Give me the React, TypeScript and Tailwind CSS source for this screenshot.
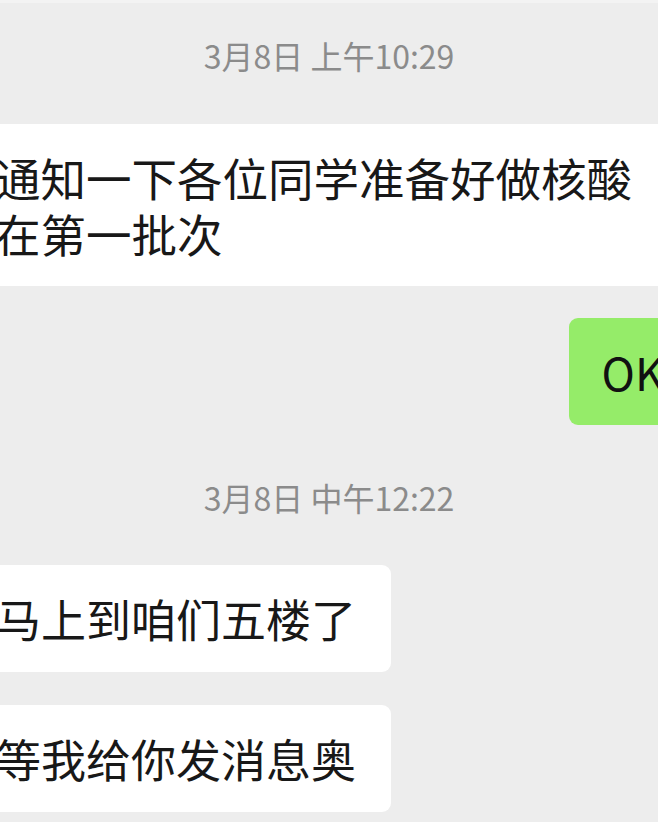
import React from "react";

const cjk = { fontFamily: '"Noto Sans CJK SC", "Noto Sans", sans-serif' };

export default function App() {
  return (
    <div
      className="w-[658px] h-[822px] bg-[#ededed] overflow-hidden flex flex-col"
      style={cjk}
    >
      <div className="h-[3px] bg-[#f3f3f3]" />
      <div className="mt-[32px] h-[40px] leading-[40px] text-center text-[32px] text-[#8b8b8b]">
        3月8日 上午10:29
      </div>

      <div className="mt-[49px] -ml-[40px] w-[720px] bg-white pl-[35px] py-[25px] text-[45.5px] leading-[56px] text-[#181818] rounded-[9px]">
        <div>通知一下各位同学准备好做核酸</div>
        <div>在第一批次</div>
      </div>

      <div className="mt-[32px] flex justify-end">
        <div className="-mr-[60px] bg-[#95ec69] rounded-[9px] pl-[33px] pr-[54px] py-[25px] text-[45px] leading-[57px] text-[#111]">
          OK
        </div>
      </div>

      <div className="mt-[52px] h-[40px] leading-[40px] text-center text-[32px] text-[#8b8b8b]">
        3月8日 中午12:22
      </div>

      <div className="mt-[48px] flex">
        <div className="-ml-[40px] bg-white rounded-[9px] pl-[36px] pr-[35px] py-[25px] text-[45px] leading-[57px] text-[#181818]">
          马上到咱们五楼了
        </div>
      </div>

      <div className="mt-[33px] flex">
        <div className="-ml-[40px] bg-white rounded-[9px] pl-[36px] pr-[35px] py-[25px] text-[45px] leading-[57px] text-[#181818]">
          等我给你发消息奥
        </div>
      </div>
    </div>
  );
}
